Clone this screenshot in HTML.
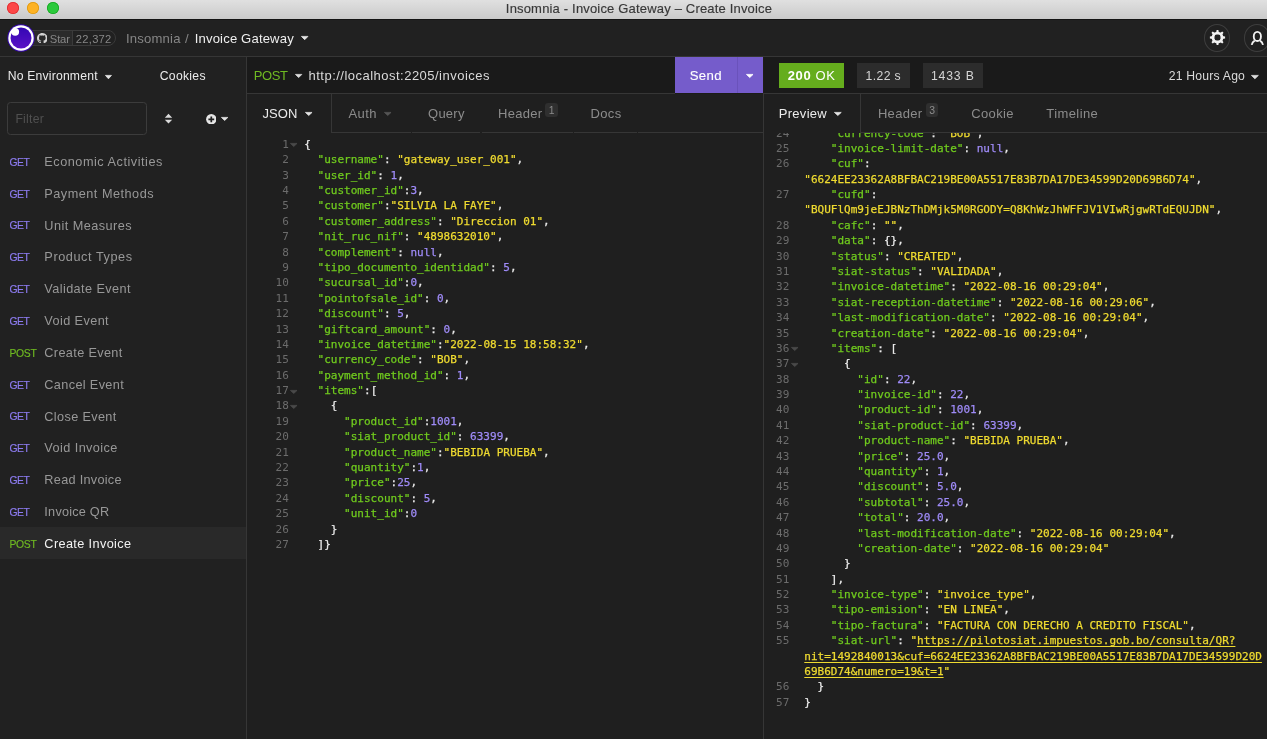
<!DOCTYPE html>
<html lang="en">
<head>
<meta charset="utf-8">
<title>Insomnia - Invoice Gateway – Create Invoice</title>
<style>
*{box-sizing:border-box;margin:0;padding:0}
html,body{width:1267px;height:739px;overflow:hidden;background:#212121}
body{position:relative;font-family:"Liberation Sans",sans-serif;color:#dddddd;font-size:13px}
.abs{position:absolute}
.tx{white-space:pre;line-height:20px}
.code{font-family:"DejaVu Sans Mono","Liberation Mono",monospace;font-size:11.02px;line-height:15.385px;white-space:pre;color:#ebebeb;-webkit-text-stroke:.25px}
.ln{color:#6c6c6c;text-align:right;-webkit-text-stroke:0}
.k{color:#70cb1e}.s{color:#efdb30}.n{color:#9f8bf8}.u{text-decoration:underline;text-underline-offset:2.1px;text-decoration-thickness:1px}
.tl{width:12px;height:12px;border-radius:50%;top:2px}
</style>
</head>
<body>
<div id="app" style="position:absolute;left:0;top:0;width:1267px;height:739px;will-change:transform">

<div class="abs" style="left:0;top:0;width:1267px;height:19.5px;background:linear-gradient(#e0e0e0,#cacaca);border-bottom:1.1px solid #141414"></div>
<div class="abs tl" style="left:6.9px;top:1.95px;background:#fc4747;box-shadow:inset 0 0 0 .8px #de2b2f"></div>
<div class="abs tl" style="left:26.9px;top:1.95px;background:#fdb224;box-shadow:inset 0 0 0 .8px #dd9810"></div>
<div class="abs tl" style="left:46.9px;top:1.95px;background:#2bc93b;box-shadow:inset 0 0 0 .8px #16a622"></div>
<div class="abs tx" style="left:505.85px;top:-1.50px;font-size:13px;letter-spacing:0.177px;color:#383838;-webkit-text-stroke:.15px #383838;">Insomnia - Invoice Gateway – Create Invoice</div>
<div class="abs" style="left:0.00px;top:56.00px;width:1267.00px;height:1.00px;background:#363636"></div>
<div class="abs" style="left:22px;top:30.3px;width:93.5px;height:15.4px;border:1px solid #3a3a3a;border-radius:8px;overflow:hidden"><div class="abs" style="left:0;top:0;width:50px;height:14px;background:#2a2a2a;border-right:1px solid #3a3a3a"></div></div>
<svg class="abs" style="left:36.8px;top:32.6px" width="10.6" height="10.6" viewBox="0 0 16 16"><path fill="#d4d4d4" d="M8 0C3.58 0 0 3.58 0 8c0 3.54 2.29 6.53 5.47 7.59.4.07.55-.17.55-.38 0-.19-.01-.82-.01-1.49-2.01.37-2.53-.49-2.69-.94-.09-.23-.48-.94-.82-1.13-.28-.15-.68-.52-.01-.53.63-.01 1.08.58 1.23.82.72 1.21 1.87.87 2.33.66.07-.52.28-.87.51-1.07-1.78-.2-3.64-.89-3.64-3.95 0-.87.31-1.59.82-2.15-.08-.2-.36-1.02.08-2.12 0 0 .67-.21 2.2.82.64-.18 1.32-.27 2-.27s1.36.09 2 .27c1.53-1.04 2.2-.82 2.2-.82.44 1.1.16 1.92.08 2.12.51.56.82 1.27.82 2.15 0 3.07-1.87 3.75-3.65 3.95.29.25.54.73.54 1.48 0 1.07-.01 1.93-.01 2.2 0 .21.15.46.55.38A8.01 8.01 0 0 0 16 8c0-4.42-3.58-8-8-8z"/></svg>
<div class="abs tx" style="left:49.84px;top:28.52px;font-size:11.2px;letter-spacing:-0.153px;color:#878787;">Star</div>
<div class="abs tx" style="left:75.84px;top:28.52px;font-size:11.2px;letter-spacing:0.250px;color:#878787;">22,372</div>
<svg class="abs" style="left:7px;top:24px" width="28" height="28" viewBox="0 0 28 28">
<defs><linearGradient id="lg" x1="0" y1="0" x2="0" y2="1"><stop offset="0" stop-color="#3407b4"/><stop offset="1" stop-color="#5a12c6"/></linearGradient></defs>
<circle cx="14" cy="14" r="13.7" fill="#3507ae"/><circle cx="14" cy="14" r="12.7" fill="#ffffff"/><circle cx="14" cy="14" r="10.5" fill="url(#lg)"/><circle cx="8.2" cy="7.8" r="3.9" fill="#ffffff"/></svg>
<div class="abs tx" style="left:125.94px;top:29.06px;font-size:13.1px;letter-spacing:0.196px;color:#868686;">Insomnia</div>
<div class="abs tx" style="left:184.94px;top:29.06px;font-size:13.1px;letter-spacing:2.469px;color:#868686;">/</div>
<div class="abs tx" style="left:194.75px;top:29.06px;font-size:13.1px;letter-spacing:0.154px;color:#efefef;">Invoice Gateway</div>
<svg class="abs" style="left:299.70px;top:34.90px" width="9.40" height="6.00" viewBox="-1 -1 9.40 6.00"><path d="M0.45 0.4H6.95L3.70 3.70Z" fill="#e4e4e4" stroke="#e4e4e4" stroke-width="0.8" stroke-linejoin="round"/></svg>
<div class="abs" style="left:1203.9px;top:24.1px;width:26.2px;height:27.6px;border:1px solid #3e3e3e;border-radius:50%"></div>
<svg class="abs" style="left:1208.5px;top:29.15px" width="17" height="17" viewBox="-8.5 -8.5 17 17"><g fill="#f2f2f2">
<path id="gt" d="M-0.9 -7.6H0.9L1.4 -4.6H-1.4Z"/><use href="#gt" transform="rotate(45)"/><use href="#gt" transform="rotate(90)"/><use href="#gt" transform="rotate(135)"/><use href="#gt" transform="rotate(180)"/><use href="#gt" transform="rotate(225)"/><use href="#gt" transform="rotate(270)"/><use href="#gt" transform="rotate(315)"/><circle r="5.85"/></g><rect x="-3" y="-3" width="6" height="6" rx="2.3" fill="#212121"/></svg>
<div class="abs" style="left:1243.9px;top:24.1px;width:26.2px;height:27.6px;border:1px solid #3e3e3e;border-radius:50%"></div>
<svg class="abs" style="left:1249px;top:30px" width="16" height="16" viewBox="0 0 16 16"><ellipse cx="8.35" cy="6.4" rx="3.6" ry="4.6" fill="none" stroke="#f2f2f2" stroke-width="1.85"/><path d="M2.7 14.9 C3.1 12.9 4.1 11.5 5.7 10.7 M14 14.9 C13.6 12.9 12.6 11.5 11 10.7" fill="none" stroke="#f2f2f2" stroke-width="1.85" stroke-linecap="butt"/></svg>
<div class="abs" style="left:246.00px;top:57.00px;width:1.00px;height:682.00px;background:#363636"></div>
<div class="abs tx" style="left:7.69px;top:66.27px;font-size:12.2px;letter-spacing:0.188px;color:#ebebeb;">No Environment</div>
<svg class="abs" style="left:104.20px;top:74.20px" width="8.90" height="6.10" viewBox="-1 -1 8.90 6.10"><path d="M0.45 0.4H6.45L3.45 3.80Z" fill="#e4e4e4" stroke="#e4e4e4" stroke-width="0.8" stroke-linejoin="round"/></svg>
<div class="abs tx" style="left:159.79px;top:66.27px;font-size:12.2px;letter-spacing:0.284px;color:#ebebeb;">Cookies</div>
<div class="abs" style="left:7.2px;top:102.3px;width:139.6px;height:32.4px;border:1px solid #3c3c3c;border-radius:3.5px"></div>
<div class="abs tx" style="left:15.39px;top:109.07px;font-size:12.2px;letter-spacing:0.254px;color:#505050;">Filter</div>
<svg class="abs" style="left:164px;top:113.1px" width="9" height="11.4" viewBox="0 0 9 11.4"><path d="M4.5 0.8 L8.2 4.7 H0.8 Z M4.5 10.6 L8.2 6.7 H0.8 Z" fill="#dadada"/></svg>
<svg class="abs" style="left:205.8px;top:113.7px" width="10.6" height="10.6" viewBox="0 0 11 11"><circle cx="5.5" cy="5.5" r="5.4" fill="#e6e6e6"/><path d="M5.5 2.5V8.5M2.5 5.5H8.500" stroke="#212121" stroke-width="1.8"/></svg>
<svg class="abs" style="left:220.10px;top:115.70px" width="9.30" height="5.80" viewBox="-1 -1 9.30 5.80"><path d="M0.45 0.4H6.85L3.65 3.50Z" fill="#e4e4e4" stroke="#e4e4e4" stroke-width="0.8" stroke-linejoin="round"/></svg>
<div class="abs tx" style="left:9.38px;top:152.70px;font-size:10.4px;letter-spacing:-0.412px;color:#8d7cf0;-webkit-text-stroke:.15px #8d7cf0;">GET</div>
<div class="abs tx" style="left:44.37px;top:151.90px;font-size:12.7px;letter-spacing:0.520px;color:#989898;">Economic Activities</div>
<div class="abs tx" style="left:9.38px;top:184.53px;font-size:10.4px;letter-spacing:-0.412px;color:#8d7cf0;-webkit-text-stroke:.15px #8d7cf0;">GET</div>
<div class="abs tx" style="left:44.37px;top:183.73px;font-size:12.7px;letter-spacing:0.494px;color:#989898;">Payment Methods</div>
<div class="abs tx" style="left:9.38px;top:216.36px;font-size:10.4px;letter-spacing:-0.412px;color:#8d7cf0;-webkit-text-stroke:.15px #8d7cf0;">GET</div>
<div class="abs tx" style="left:44.37px;top:215.57px;font-size:12.7px;letter-spacing:0.452px;color:#989898;">Unit Measures</div>
<div class="abs tx" style="left:9.38px;top:248.20px;font-size:10.4px;letter-spacing:-0.412px;color:#8d7cf0;-webkit-text-stroke:.15px #8d7cf0;">GET</div>
<div class="abs tx" style="left:44.37px;top:247.40px;font-size:12.7px;letter-spacing:0.569px;color:#989898;">Product Types</div>
<div class="abs tx" style="left:9.38px;top:280.03px;font-size:10.4px;letter-spacing:-0.412px;color:#8d7cf0;-webkit-text-stroke:.15px #8d7cf0;">GET</div>
<div class="abs tx" style="left:44.37px;top:279.23px;font-size:12.7px;letter-spacing:0.399px;color:#989898;">Validate Event</div>
<div class="abs tx" style="left:9.38px;top:311.86px;font-size:10.4px;letter-spacing:-0.412px;color:#8d7cf0;-webkit-text-stroke:.15px #8d7cf0;">GET</div>
<div class="abs tx" style="left:44.37px;top:311.06px;font-size:12.7px;letter-spacing:0.400px;color:#989898;">Void Event</div>
<div class="abs tx" style="left:9.38px;top:343.69px;font-size:10.4px;letter-spacing:-0.314px;color:#6fba22;-webkit-text-stroke:.15px #6fba22;">POST</div>
<div class="abs tx" style="left:44.37px;top:342.90px;font-size:12.7px;letter-spacing:0.351px;color:#989898;">Create Event</div>
<div class="abs tx" style="left:9.38px;top:375.53px;font-size:10.4px;letter-spacing:-0.412px;color:#8d7cf0;-webkit-text-stroke:.15px #8d7cf0;">GET</div>
<div class="abs tx" style="left:44.37px;top:374.73px;font-size:12.7px;letter-spacing:0.350px;color:#989898;">Cancel Event</div>
<div class="abs tx" style="left:9.38px;top:407.36px;font-size:10.4px;letter-spacing:-0.412px;color:#8d7cf0;-webkit-text-stroke:.15px #8d7cf0;">GET</div>
<div class="abs tx" style="left:44.37px;top:406.56px;font-size:12.7px;letter-spacing:0.351px;color:#989898;">Close Event</div>
<div class="abs tx" style="left:9.38px;top:439.19px;font-size:10.4px;letter-spacing:-0.412px;color:#8d7cf0;-webkit-text-stroke:.15px #8d7cf0;">GET</div>
<div class="abs tx" style="left:44.37px;top:438.40px;font-size:12.7px;letter-spacing:0.421px;color:#989898;">Void Invoice</div>
<div class="abs tx" style="left:9.38px;top:471.03px;font-size:10.4px;letter-spacing:-0.412px;color:#8d7cf0;-webkit-text-stroke:.15px #8d7cf0;">GET</div>
<div class="abs tx" style="left:44.37px;top:470.23px;font-size:12.7px;letter-spacing:0.284px;color:#989898;">Read Invoice</div>
<div class="abs tx" style="left:9.38px;top:502.86px;font-size:10.4px;letter-spacing:-0.412px;color:#8d7cf0;-webkit-text-stroke:.15px #8d7cf0;">GET</div>
<div class="abs tx" style="left:44.37px;top:502.06px;font-size:12.7px;letter-spacing:0.220px;color:#989898;">Invoice QR</div>
<div class="abs" style="left:0.00px;top:527.00px;width:246.00px;height:32.00px;background:#292929"></div>
<div class="abs tx" style="left:9.38px;top:534.69px;font-size:10.4px;letter-spacing:-0.314px;color:#6fba22;-webkit-text-stroke:.15px #6fba22;">POST</div>
<div class="abs tx" style="left:44.37px;top:533.90px;font-size:12.7px;letter-spacing:0.376px;color:#f2f2f2;">Create Invoice</div>
<div class="abs" style="left:247.00px;top:57.00px;width:1020.00px;height:682.00px;background:#1f1f1f"></div>
<div class="abs" style="left:247.00px;top:57.00px;width:517.00px;height:36.00px;background:#1a1a1a"></div>
<div class="abs" style="left:247.00px;top:93.00px;width:428.00px;height:1.00px;background:#363636"></div>
<div class="abs" style="left:675.00px;top:93.00px;width:88.00px;height:1.00px;background:#1c1c18"></div>
<div class="abs tx" style="left:253.65px;top:66.00px;font-size:13.0px;letter-spacing:-0.327px;color:#6fba22;">POST</div>
<svg class="abs" style="left:294.30px;top:72.80px" width="9.30" height="5.90" viewBox="-1 -1 9.30 5.90"><path d="M0.45 0.4H6.85L3.65 3.60Z" fill="#dcdcdc" stroke="#dcdcdc" stroke-width="0.8" stroke-linejoin="round"/></svg>
<div class="abs tx" style="left:308.55px;top:66.00px;font-size:13.0px;letter-spacing:0.482px;color:#dadada;">http://localhost:2205/invoices</div>
<div class="abs" style="left:674.80px;top:57.00px;width:88.20px;height:36.00px;background:#755ccb"></div>
<div class="abs" style="left:737.20px;top:57.00px;width:0.90px;height:36.00px;background:#6a52bb"></div>
<div class="abs tx" style="left:689.64px;top:65.83px;font-size:13.2px;letter-spacing:0.352px;color:#ffffff;-webkit-text-stroke:.12px #fff;">Send</div>
<svg class="abs" style="left:745.40px;top:72.70px" width="9.50" height="5.90" viewBox="-1 -1 9.50 5.90"><path d="M0.45 0.4H7.05L3.75 3.60Z" fill="#ffffff" stroke="#ffffff" stroke-width="0.8" stroke-linejoin="round"/></svg>
<div class="abs" style="left:332.00px;top:132.00px;width:431.00px;height:1.00px;background:#363636"></div>
<div class="abs" style="left:331.00px;top:94.00px;width:1.00px;height:39.00px;background:#363636"></div>
<div class="abs" style="left:411.10px;top:132.00px;width:1.40px;height:1.00px;background:#1f1f1f"></div>
<div class="abs" style="left:480.20px;top:132.00px;width:1.40px;height:1.00px;background:#1f1f1f"></div>
<div class="abs" style="left:573.00px;top:132.00px;width:1.40px;height:1.00px;background:#1f1f1f"></div>
<div class="abs" style="left:636.60px;top:132.00px;width:1.40px;height:1.00px;background:#1f1f1f"></div>
<div class="abs tx" style="left:262.55px;top:103.90px;font-size:13.0px;letter-spacing:0.032px;color:#ebebeb;">JSON</div>
<svg class="abs" style="left:303.60px;top:110.80px" width="9.50" height="5.80" viewBox="-1 -1 9.50 5.80"><path d="M0.45 0.4H7.05L3.75 3.50Z" fill="#e4e4e4" stroke="#e4e4e4" stroke-width="0.8" stroke-linejoin="round"/></svg>
<div class="abs tx" style="left:348.55px;top:103.90px;font-size:13.0px;letter-spacing:0.388px;color:#8c8c8c;">Auth</div>
<svg class="abs" style="left:383.10px;top:110.80px" width="9.50" height="5.80" viewBox="-1 -1 9.50 5.80"><path d="M0.45 0.4H7.05L3.75 3.50Z" fill="#555555" stroke="#555555" stroke-width="0.8" stroke-linejoin="round"/></svg>
<div class="abs tx" style="left:428.05px;top:103.90px;font-size:13.0px;letter-spacing:0.239px;color:#8c8c8c;">Query</div>
<div class="abs tx" style="left:498.05px;top:103.90px;font-size:13.0px;letter-spacing:0.277px;color:#8c8c8c;">Header</div>
<div class="abs" style="left:545px;top:103px;width:13.1px;height:13.8px;background:#2f2f2f;border-radius:3px;font-size:10.4px;line-height:15.4px;text-align:center;color:#8c8c8c">1</div>
<div class="abs tx" style="left:590.45px;top:103.90px;font-size:13.0px;letter-spacing:0.394px;color:#8c8c8c;">Docs</div>
<div class="abs" style="left:247.00px;top:133.00px;width:516.00px;height:606.00px;background:#1f1f1f"></div>
<div class="abs code ln" style="left:247px;width:41.8px;top:136.89px">1</div>
<svg class="abs" style="left:289.30px;top:142.49px" width="9.50" height="5.80" viewBox="-1 -1 9.50 5.80"><path d="M0.45 0.4H7.05L3.75 3.50Z" fill="#4a4a4a" stroke="#4a4a4a" stroke-width="0.8" stroke-linejoin="round"/></svg>
<div class="abs code" style="left:304.3px;top:136.89px">{</div>
<div class="abs code ln" style="left:247px;width:41.8px;top:152.28px">2</div>
<div class="abs code" style="left:304.3px;top:152.28px">  <span class="k">"username"</span>: <span class="s">"gateway_user_001"</span>,</div>
<div class="abs code ln" style="left:247px;width:41.8px;top:167.66px">3</div>
<div class="abs code" style="left:304.3px;top:167.66px">  <span class="k">"user_id"</span>: <span class="n">1</span>,</div>
<div class="abs code ln" style="left:247px;width:41.8px;top:183.05px">4</div>
<div class="abs code" style="left:304.3px;top:183.05px">  <span class="k">"customer_id"</span>:<span class="n">3</span>,</div>
<div class="abs code ln" style="left:247px;width:41.8px;top:198.43px">5</div>
<div class="abs code" style="left:304.3px;top:198.43px">  <span class="k">"customer"</span>:<span class="s">"SILVIA LA FAYE"</span>,</div>
<div class="abs code ln" style="left:247px;width:41.8px;top:213.82px">6</div>
<div class="abs code" style="left:304.3px;top:213.82px">  <span class="k">"customer_address"</span>: <span class="s">"Direccion 01"</span>,</div>
<div class="abs code ln" style="left:247px;width:41.8px;top:229.20px">7</div>
<div class="abs code" style="left:304.3px;top:229.20px">  <span class="k">"nit_ruc_nif"</span>: <span class="s">"4898632010"</span>,</div>
<div class="abs code ln" style="left:247px;width:41.8px;top:244.59px">8</div>
<div class="abs code" style="left:304.3px;top:244.59px">  <span class="k">"complement"</span>: <span class="n">null</span>,</div>
<div class="abs code ln" style="left:247px;width:41.8px;top:259.97px">9</div>
<div class="abs code" style="left:304.3px;top:259.97px">  <span class="k">"tipo_documento_identidad"</span>: <span class="n">5</span>,</div>
<div class="abs code ln" style="left:247px;width:41.8px;top:275.36px">10</div>
<div class="abs code" style="left:304.3px;top:275.36px">  <span class="k">"sucursal_id"</span>:<span class="n">0</span>,</div>
<div class="abs code ln" style="left:247px;width:41.8px;top:290.74px">11</div>
<div class="abs code" style="left:304.3px;top:290.74px">  <span class="k">"pointofsale_id"</span>: <span class="n">0</span>,</div>
<div class="abs code ln" style="left:247px;width:41.8px;top:306.13px">12</div>
<div class="abs code" style="left:304.3px;top:306.13px">  <span class="k">"discount"</span>: <span class="n">5</span>,</div>
<div class="abs code ln" style="left:247px;width:41.8px;top:321.51px">13</div>
<div class="abs code" style="left:304.3px;top:321.51px">  <span class="k">"giftcard_amount"</span>: <span class="n">0</span>,</div>
<div class="abs code ln" style="left:247px;width:41.8px;top:336.90px">14</div>
<div class="abs code" style="left:304.3px;top:336.90px">  <span class="k">"invoice_datetime"</span>:<span class="s">"2022-08-15 18:58:32"</span>,</div>
<div class="abs code ln" style="left:247px;width:41.8px;top:352.28px">15</div>
<div class="abs code" style="left:304.3px;top:352.28px">  <span class="k">"currency_code"</span>: <span class="s">"BOB"</span>,</div>
<div class="abs code ln" style="left:247px;width:41.8px;top:367.67px">16</div>
<div class="abs code" style="left:304.3px;top:367.67px">  <span class="k">"payment_method_id"</span>: <span class="n">1</span>,</div>
<div class="abs code ln" style="left:247px;width:41.8px;top:383.05px">17</div>
<svg class="abs" style="left:289.30px;top:388.65px" width="9.50" height="5.80" viewBox="-1 -1 9.50 5.80"><path d="M0.45 0.4H7.05L3.75 3.50Z" fill="#4a4a4a" stroke="#4a4a4a" stroke-width="0.8" stroke-linejoin="round"/></svg>
<div class="abs code" style="left:304.3px;top:383.05px">  <span class="k">"items"</span>:[</div>
<div class="abs code ln" style="left:247px;width:41.8px;top:398.44px">18</div>
<svg class="abs" style="left:289.30px;top:404.04px" width="9.50" height="5.80" viewBox="-1 -1 9.50 5.80"><path d="M0.45 0.4H7.05L3.75 3.50Z" fill="#4a4a4a" stroke="#4a4a4a" stroke-width="0.8" stroke-linejoin="round"/></svg>
<div class="abs code" style="left:304.3px;top:398.44px">    {</div>
<div class="abs code ln" style="left:247px;width:41.8px;top:413.82px">19</div>
<div class="abs code" style="left:304.3px;top:413.82px">      <span class="k">"product_id"</span>:<span class="n">1001</span>,</div>
<div class="abs code ln" style="left:247px;width:41.8px;top:429.21px">20</div>
<div class="abs code" style="left:304.3px;top:429.21px">      <span class="k">"siat_product_id"</span>: <span class="n">63399</span>,</div>
<div class="abs code ln" style="left:247px;width:41.8px;top:444.59px">21</div>
<div class="abs code" style="left:304.3px;top:444.59px">      <span class="k">"product_name"</span>:<span class="s">"BEBIDA PRUEBA"</span>,</div>
<div class="abs code ln" style="left:247px;width:41.8px;top:459.98px">22</div>
<div class="abs code" style="left:304.3px;top:459.98px">      <span class="k">"quantity"</span>:<span class="n">1</span>,</div>
<div class="abs code ln" style="left:247px;width:41.8px;top:475.36px">23</div>
<div class="abs code" style="left:304.3px;top:475.36px">      <span class="k">"price"</span>:<span class="n">25</span>,</div>
<div class="abs code ln" style="left:247px;width:41.8px;top:490.75px">24</div>
<div class="abs code" style="left:304.3px;top:490.75px">      <span class="k">"discount"</span>: <span class="n">5</span>,</div>
<div class="abs code ln" style="left:247px;width:41.8px;top:506.13px">25</div>
<div class="abs code" style="left:304.3px;top:506.13px">      <span class="k">"unit_id"</span>:<span class="n">0</span></div>
<div class="abs code ln" style="left:247px;width:41.8px;top:521.52px">26</div>
<div class="abs code" style="left:304.3px;top:521.52px">    }</div>
<div class="abs code ln" style="left:247px;width:41.8px;top:536.90px">27</div>
<div class="abs code" style="left:304.3px;top:536.90px">  ]}</div>
<div class="abs" style="left:763.00px;top:57.00px;width:1.00px;height:36.00px;background:#1e1d18"></div>
<div class="abs" style="left:764.00px;top:57.00px;width:503.00px;height:36.00px;background:#1a1a1a"></div>
<div class="abs" style="left:764.00px;top:93.00px;width:503.00px;height:1.00px;background:#363636"></div>
<div class="abs" style="left:763.00px;top:93.00px;width:1.00px;height:646.00px;background:#363636"></div>
<div class="abs" style="left:778.90px;top:63.20px;width:65.20px;height:24.60px;background:#65ad1d"></div>
<div class="abs tx" style="left:787.65px;top:65.60px;font-size:13.0px;letter-spacing:0.648px;color:#ffffff;"><b>200</b> OK</div>
<div class="abs" style="left:857.30px;top:63.20px;width:52.80px;height:24.60px;background:#2c2c2c"></div>
<div class="abs tx" style="left:865.49px;top:65.87px;font-size:12.2px;letter-spacing:0.403px;color:#d6d6d6;">1.22 s</div>
<div class="abs" style="left:923.00px;top:63.20px;width:59.90px;height:24.60px;background:#2c2c2c"></div>
<div class="abs tx" style="left:930.99px;top:65.87px;font-size:12.2px;letter-spacing:0.830px;color:#d6d6d6;">1433 B</div>
<div class="abs tx" style="left:1168.79px;top:66.37px;font-size:12.2px;letter-spacing:0.205px;color:#dadada;">21 Hours Ago</div>
<svg class="abs" style="left:1250.40px;top:74.20px" width="9.80" height="6.10" viewBox="-1 -1 9.80 6.10"><path d="M0.45 0.4H7.35L3.90 3.80Z" fill="#dcdcdc" stroke="#dcdcdc" stroke-width="0.8" stroke-linejoin="round"/></svg>
<div class="abs" style="left:861.00px;top:132.00px;width:406.00px;height:1.00px;background:#363636"></div>
<div class="abs" style="left:860.00px;top:94.00px;width:1.00px;height:39.00px;background:#363636"></div>
<div class="abs tx" style="left:778.75px;top:103.70px;font-size:13.0px;letter-spacing:0.293px;color:#ebebeb;">Preview</div>
<svg class="abs" style="left:832.90px;top:110.80px" width="9.70" height="5.80" viewBox="-1 -1 9.70 5.80"><path d="M0.45 0.4H7.25L3.85 3.50Z" fill="#e4e4e4" stroke="#e4e4e4" stroke-width="0.8" stroke-linejoin="round"/></svg>
<div class="abs tx" style="left:877.95px;top:103.70px;font-size:13.0px;letter-spacing:0.293px;color:#8c8c8c;">Header</div>
<div class="abs" style="left:926px;top:103px;width:12.1px;height:13.8px;background:#2f2f2f;border-radius:3px;font-size:10.4px;line-height:15.4px;text-align:center;color:#8c8c8c">3</div>
<div class="abs tx" style="left:971.15px;top:103.70px;font-size:13.0px;letter-spacing:0.389px;color:#8c8c8c;">Cookie</div>
<div class="abs tx" style="left:1046.35px;top:103.70px;font-size:13.0px;letter-spacing:0.405px;color:#8c8c8c;">Timeline</div>
<div class="abs" style="left:764px;top:132.6px;width:503px;height:606.4px;background:#1f1f1f;overflow:hidden">
<div class="abs code ln" style="left:0;width:25.3px;top:-7.09px">24</div>
<div class="abs code" style="left:40.3px;top:-7.09px">    <span class="k">"currency-code"</span>: <span class="s">"BOB"</span>,</div>
<div class="abs code ln" style="left:0;width:25.3px;top:8.29px">25</div>
<div class="abs code" style="left:40.3px;top:8.29px">    <span class="k">"invoice-limit-date"</span>: <span class="n">null</span>,</div>
<div class="abs code ln" style="left:0;width:25.3px;top:23.68px">26</div>
<div class="abs code" style="left:40.3px;top:23.68px">    <span class="k">"cuf"</span>:</div>
<div class="abs code" style="left:40.3px;top:39.06px"><span class="s">"6624EE23362A8BFBAC219BE00A5517E83B7DA17DE34599D20D69B6D74"</span>,</div>
<div class="abs code ln" style="left:0;width:25.3px;top:54.45px">27</div>
<div class="abs code" style="left:40.3px;top:54.45px">    <span class="k">"cufd"</span>:</div>
<div class="abs code" style="left:40.3px;top:69.83px"><span class="s">"BQUFlQm9jeEJBNzThDMjk5M0RGODY=Q8KhWzJhWFFJV1VIwRjgwRTdEQUJDN"</span>,</div>
<div class="abs code ln" style="left:0;width:25.3px;top:85.22px">28</div>
<div class="abs code" style="left:40.3px;top:85.22px">    <span class="k">"cafc"</span>: <span class="s">""</span>,</div>
<div class="abs code ln" style="left:0;width:25.3px;top:100.60px">29</div>
<div class="abs code" style="left:40.3px;top:100.60px">    <span class="k">"data"</span>: {},</div>
<div class="abs code ln" style="left:0;width:25.3px;top:115.99px">30</div>
<div class="abs code" style="left:40.3px;top:115.99px">    <span class="k">"status"</span>: <span class="s">"CREATED"</span>,</div>
<div class="abs code ln" style="left:0;width:25.3px;top:131.37px">31</div>
<div class="abs code" style="left:40.3px;top:131.37px">    <span class="k">"siat-status"</span>: <span class="s">"VALIDADA"</span>,</div>
<div class="abs code ln" style="left:0;width:25.3px;top:146.76px">32</div>
<div class="abs code" style="left:40.3px;top:146.76px">    <span class="k">"invoice-datetime"</span>: <span class="s">"2022-08-16 00:29:04"</span>,</div>
<div class="abs code ln" style="left:0;width:25.3px;top:162.14px">33</div>
<div class="abs code" style="left:40.3px;top:162.14px">    <span class="k">"siat-reception-datetime"</span>: <span class="s">"2022-08-16 00:29:06"</span>,</div>
<div class="abs code ln" style="left:0;width:25.3px;top:177.53px">34</div>
<div class="abs code" style="left:40.3px;top:177.53px">    <span class="k">"last-modification-date"</span>: <span class="s">"2022-08-16 00:29:04"</span>,</div>
<div class="abs code ln" style="left:0;width:25.3px;top:192.91px">35</div>
<div class="abs code" style="left:40.3px;top:192.91px">    <span class="k">"creation-date"</span>: <span class="s">"2022-08-16 00:29:04"</span>,</div>
<div class="abs code ln" style="left:0;width:25.3px;top:208.30px">36</div>
<svg class="abs" style="left:26.00px;top:213.90px" width="9.50" height="5.80" viewBox="-1 -1 9.50 5.80"><path d="M0.45 0.4H7.05L3.75 3.50Z" fill="#4a4a4a" stroke="#4a4a4a" stroke-width="0.8" stroke-linejoin="round"/></svg>
<div class="abs code" style="left:40.3px;top:208.30px">    <span class="k">"items"</span>: [</div>
<div class="abs code ln" style="left:0;width:25.3px;top:223.68px">37</div>
<svg class="abs" style="left:26.00px;top:229.28px" width="9.50" height="5.80" viewBox="-1 -1 9.50 5.80"><path d="M0.45 0.4H7.05L3.75 3.50Z" fill="#4a4a4a" stroke="#4a4a4a" stroke-width="0.8" stroke-linejoin="round"/></svg>
<div class="abs code" style="left:40.3px;top:223.68px">      {</div>
<div class="abs code ln" style="left:0;width:25.3px;top:239.07px">38</div>
<div class="abs code" style="left:40.3px;top:239.07px">        <span class="k">"id"</span>: <span class="n">22</span>,</div>
<div class="abs code ln" style="left:0;width:25.3px;top:254.45px">39</div>
<div class="abs code" style="left:40.3px;top:254.45px">        <span class="k">"invoice-id"</span>: <span class="n">22</span>,</div>
<div class="abs code ln" style="left:0;width:25.3px;top:269.84px">40</div>
<div class="abs code" style="left:40.3px;top:269.84px">        <span class="k">"product-id"</span>: <span class="n">1001</span>,</div>
<div class="abs code ln" style="left:0;width:25.3px;top:285.22px">41</div>
<div class="abs code" style="left:40.3px;top:285.22px">        <span class="k">"siat-product-id"</span>: <span class="n">63399</span>,</div>
<div class="abs code ln" style="left:0;width:25.3px;top:300.61px">42</div>
<div class="abs code" style="left:40.3px;top:300.61px">        <span class="k">"product-name"</span>: <span class="s">"BEBIDA PRUEBA"</span>,</div>
<div class="abs code ln" style="left:0;width:25.3px;top:315.99px">43</div>
<div class="abs code" style="left:40.3px;top:315.99px">        <span class="k">"price"</span>: <span class="n">25.0</span>,</div>
<div class="abs code ln" style="left:0;width:25.3px;top:331.38px">44</div>
<div class="abs code" style="left:40.3px;top:331.38px">        <span class="k">"quantity"</span>: <span class="n">1</span>,</div>
<div class="abs code ln" style="left:0;width:25.3px;top:346.76px">45</div>
<div class="abs code" style="left:40.3px;top:346.76px">        <span class="k">"discount"</span>: <span class="n">5.0</span>,</div>
<div class="abs code ln" style="left:0;width:25.3px;top:362.15px">46</div>
<div class="abs code" style="left:40.3px;top:362.15px">        <span class="k">"subtotal"</span>: <span class="n">25.0</span>,</div>
<div class="abs code ln" style="left:0;width:25.3px;top:377.53px">47</div>
<div class="abs code" style="left:40.3px;top:377.53px">        <span class="k">"total"</span>: <span class="n">20.0</span>,</div>
<div class="abs code ln" style="left:0;width:25.3px;top:392.92px">48</div>
<div class="abs code" style="left:40.3px;top:392.92px">        <span class="k">"last-modification-date"</span>: <span class="s">"2022-08-16 00:29:04"</span>,</div>
<div class="abs code ln" style="left:0;width:25.3px;top:408.30px">49</div>
<div class="abs code" style="left:40.3px;top:408.30px">        <span class="k">"creation-date"</span>: <span class="s">"2022-08-16 00:29:04"</span></div>
<div class="abs code ln" style="left:0;width:25.3px;top:423.69px">50</div>
<div class="abs code" style="left:40.3px;top:423.69px">      }</div>
<div class="abs code ln" style="left:0;width:25.3px;top:439.07px">51</div>
<div class="abs code" style="left:40.3px;top:439.07px">    ],</div>
<div class="abs code ln" style="left:0;width:25.3px;top:454.46px">52</div>
<div class="abs code" style="left:40.3px;top:454.46px">    <span class="k">"invoice-type"</span>: <span class="s">"invoice_type"</span>,</div>
<div class="abs code ln" style="left:0;width:25.3px;top:469.84px">53</div>
<div class="abs code" style="left:40.3px;top:469.84px">    <span class="k">"tipo-emision"</span>: <span class="s">"EN LINEA"</span>,</div>
<div class="abs code ln" style="left:0;width:25.3px;top:485.23px">54</div>
<div class="abs code" style="left:40.3px;top:485.23px">    <span class="k">"tipo-factura"</span>: <span class="s">"FACTURA CON DERECHO A CREDITO FISCAL"</span>,</div>
<div class="abs code ln" style="left:0;width:25.3px;top:500.61px">55</div>
<div class="abs code" style="left:40.3px;top:500.61px">    <span class="k">"siat-url"</span>: <span class="s">"<span class="u">https://pilotosiat.impuestos.gob.bo/consulta/QR?</span></span></div>
<div class="abs code" style="left:40.3px;top:516.00px"><span class="s u">nit=1492840013&amp;cuf=6624EE23362A8BFBAC219BE00A5517E83B7DA17DE34599D20D</span></div>
<div class="abs code" style="left:40.3px;top:531.38px"><span class="s"><span class="u">69B6D74&amp;numero=19&amp;t=1</span>"</span></div>
<div class="abs code ln" style="left:0;width:25.3px;top:546.77px">56</div>
<div class="abs code" style="left:40.3px;top:546.77px">  }</div>
<div class="abs code ln" style="left:0;width:25.3px;top:562.15px">57</div>
<div class="abs code" style="left:40.3px;top:562.15px">}</div>
</div>
</div>
</body>
</html>
